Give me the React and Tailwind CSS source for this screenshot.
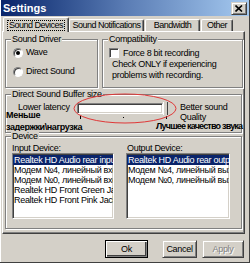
import React from 'react';

const raised =
  'border border-[#d4d0c8] border-r-[#404040] border-b-[#404040] shadow-[inset_1px_1px_0_#fff,inset_-1px_-1px_0_#808080]';
const sunken =
  'border border-[#808080] border-r-white border-b-white shadow-[inset_1px_1px_0_#404040,inset_-1px_-1px_0_#d4d0c8]';
const tab =
  'border-t border-l border-r border-white border-r-[#404040] rounded-t-[2px] shadow-[inset_-1px_0_0_#808080] flex items-center justify-center leading-none whitespace-nowrap tracking-[-0.5px]';

function GroupBox({ label, className = '', children }) {
  return (
    <div className={`relative border border-[#808080] shadow-[inset_1px_1px_0_#fff,1px_1px_0_#fff] ${className}`}>
      <span className="absolute -top-[6px] left-[5px] bg-[#d4d0c8] px-[1px] leading-[10px]">{label}</span>
      {children}
    </div>
  );
}

function Radio({ checked, label }) {
  return (
    <div className="flex items-center gap-[3px] h-[11px]">
      <span className="w-[10px] h-[10px] rounded-full bg-white border border-[#808080] border-r-white border-b-white shadow-[inset_1px_1px_0_#404040] flex items-center justify-center">
        {checked && <span className="w-[4px] h-[4px] rounded-full bg-black" />}
      </span>
      <span>{label}</span>
    </div>
  );
}

function ListBox({ items }) {
  return (
    <div className={`${sunken} bg-white h-[66px] overflow-hidden pt-[1px]`}>
      {items.map((item, i) => (
        <div
          key={i}
          className={`h-[10px] leading-[10px] pl-[1px] whitespace-nowrap overflow-hidden ${
            i === 0 ? 'bg-[#0a246a] text-white' : 'text-black'
          }`}
        >
          {item}
        </div>
      ))}
    </div>
  );
}

export default function App() {
  return (
    <div className="relative w-[250px] h-[263px] overflow-hidden bg-[#d4d0c8] px-[1px] font-['Liberation_Sans',Arial,sans-serif] text-[9px] tracking-[-0.3px] text-black shadow-[inset_-1px_-1px_0_#404040,inset_1px_1px_0_#fff]">
      {/* Title bar */}
      <div className="h-[16px] bg-linear-to-r from-[#0a246a] via-[#5a7cb4] to-[#a6caf0] flex items-center justify-between pl-[2px] pr-[2px]">
        <span className="text-white font-bold text-[11px] tracking-normal leading-none">Settings</span>
        <button className={`${raised} w-[16px] h-[13px] flex items-center justify-center bg-[#d4d0c8]`}>
          <svg width="8" height="7" viewBox="0 0 8 7">
            <path d="M0.5 0.5 L7 6.5 M7 0.5 L0.5 6.5" stroke="#000" strokeWidth="1.6" />
          </svg>
        </button>
      </div>

      {/* Tabs */}
      <div className="flex items-end h-[15px] pl-[2px]">
        <div className={`${tab} relative z-10 -mb-[1px] h-[15px] w-[66px] bg-[#d4d0c8]`}>
          <span className="border border-dotted border-black px-[1px] leading-[9px]">Sound Devices</span>
        </div>
        <div className={`${tab} h-[12px] w-[75px]`}>Sound Notifications</div>
        <div className={`${tab} ml-[1px] h-[12px] w-[55px]`}>Bandwidth</div>
        <div className={`${tab} ml-[1px] h-[12px] w-[32px]`}>Other</div>
      </div>

      {/* Tab panel */}
      <div className="ml-[1px] w-[243px] h-[203px] border border-white border-r-[#404040] border-b-[#404040] shadow-[inset_-1px_-1px_0_#808080] pl-[2px] pt-[7px]">
        <div className="flex gap-[4px]">
          <GroupBox label="Sound Driver" className="w-[93px] h-[49px]">
            <div className="flex flex-col gap-[8px] pl-[7px] pt-[7px]">
              <Radio checked label="Wave" />
              <Radio label="Direct Sound" />
            </div>
          </GroupBox>
          <GroupBox label="Compatibility" className="w-[141px] h-[49px]">
            <div className="pl-[6px] pt-[8px] leading-[10.5px]">
              <div className="flex items-center gap-[4px] h-[10px]">
                <span className="w-[10px] h-[10px] bg-white border border-[#808080] border-r-white border-b-white shadow-[inset_1px_1px_0_#404040]" />
                <span>Force 8 bit recording</span>
              </div>
              <div className="pl-[3px] pt-[1px]">Check ONLY if experiencing</div>
              <div className="pl-[3px]">problems with recording.</div>
            </div>
          </GroupBox>
        </div>

        <GroupBox label="Direct Sound Buffer size" className="mt-[6px] w-[237px] h-[39px]">
          <div className="flex items-start pl-[12px] pt-[7px]">
            <div className="w-[59px] leading-[10px]">Lower latency</div>
            <div className="flex flex-col">
              <div className="flex items-center">
                <div className={`${sunken} w-[86px] h-[11px] bg-white`} />
                <div className="w-[5px] h-[13px] bg-[#d4d0c8] border-l border-white border-r border-r-[#404040]" />
              </div>
              <svg width="91" height="5" viewBox="0 0 91 5">
                <path d="M3.5 1 V4 M46.5 2 V3 M89.5 1 V4" stroke="#000" strokeWidth="1" />
              </svg>
            </div>
            <div className="ml-[12px] leading-[10px]">
              Better sound
              <br />
              Quality
            </div>
          </div>
          {/* Annotations added over the screenshot */}
          <div className="absolute left-[0px] top-[15px] font-bold text-[9px] tracking-[-0.3px] leading-[10px] text-black">
            Меньше
          </div>
          <div className="absolute left-[0px] top-[27px] font-bold text-[9px] tracking-[-0.4px] leading-[10px] text-black whitespace-nowrap">
            задержки\нагрузка
          </div>
          <div className="absolute left-[150px] top-[26px] font-bold text-[9px] tracking-[-0.8px] leading-[10px] text-black whitespace-nowrap">
            Лучшее качество звука
          </div>
        </GroupBox>

        <GroupBox label="Device" className="mt-[3px] w-[237px] h-[93px]">
          <div className="flex pl-[6px] pt-[6px]">
            <div className="w-[102px]">
              <div className="h-[10px] leading-[10px]">Input Device:</div>
              <ListBox
                items={[
                  'Realtek HD Audio rear input',
                  'Модем №4, линейный вход',
                  'Модем №0, линейный вход',
                  'Realtek HD Front Green Jack',
                  'Realtek HD Front Pink Jack',
                ]}
              />
            </div>
            <div className="ml-[12px] w-[104px]">
              <div className="h-[10px] leading-[10px] pl-[1px]">Output Device:</div>
              <ListBox
                items={[
                  'Realtek HD Audio rear output',
                  'Модем №4, линейный выход',
                  'Модем №0, линейный выход',
                ]}
              />
            </div>
          </div>
        </GroupBox>
      </div>

      {/* Buttons */}
      <div className="flex justify-end pr-[5px] mt-[6px]">
        <button className="w-[43px] h-[18px] border border-black shadow-[inset_1px_1px_0_#fff,inset_-1px_-1px_0_#808080,inset_-2px_-2px_0_#404040] bg-[#d4d0c8] leading-none">
          Ok
        </button>
        <button className={`${raised} ml-[14px] w-[35px] h-[18px] bg-[#d4d0c8] leading-none`}>Cancel</button>
        <button className={`${raised} ml-[5px] w-[42px] h-[18px] bg-[#d4d0c8] leading-none text-[#808080] [text-shadow:1px_1px_0_#fff]`}>
          Apply
        </button>
      </div>

      {/* Red ellipse annotation */}
      <svg className="absolute left-[73px] top-[93px]" width="104" height="31" viewBox="0 0 104 31">
        <ellipse cx="52" cy="15.5" rx="51" ry="14.5" fill="none" stroke="#e03838" strokeWidth="1" />
      </svg>
    </div>
  );
}
